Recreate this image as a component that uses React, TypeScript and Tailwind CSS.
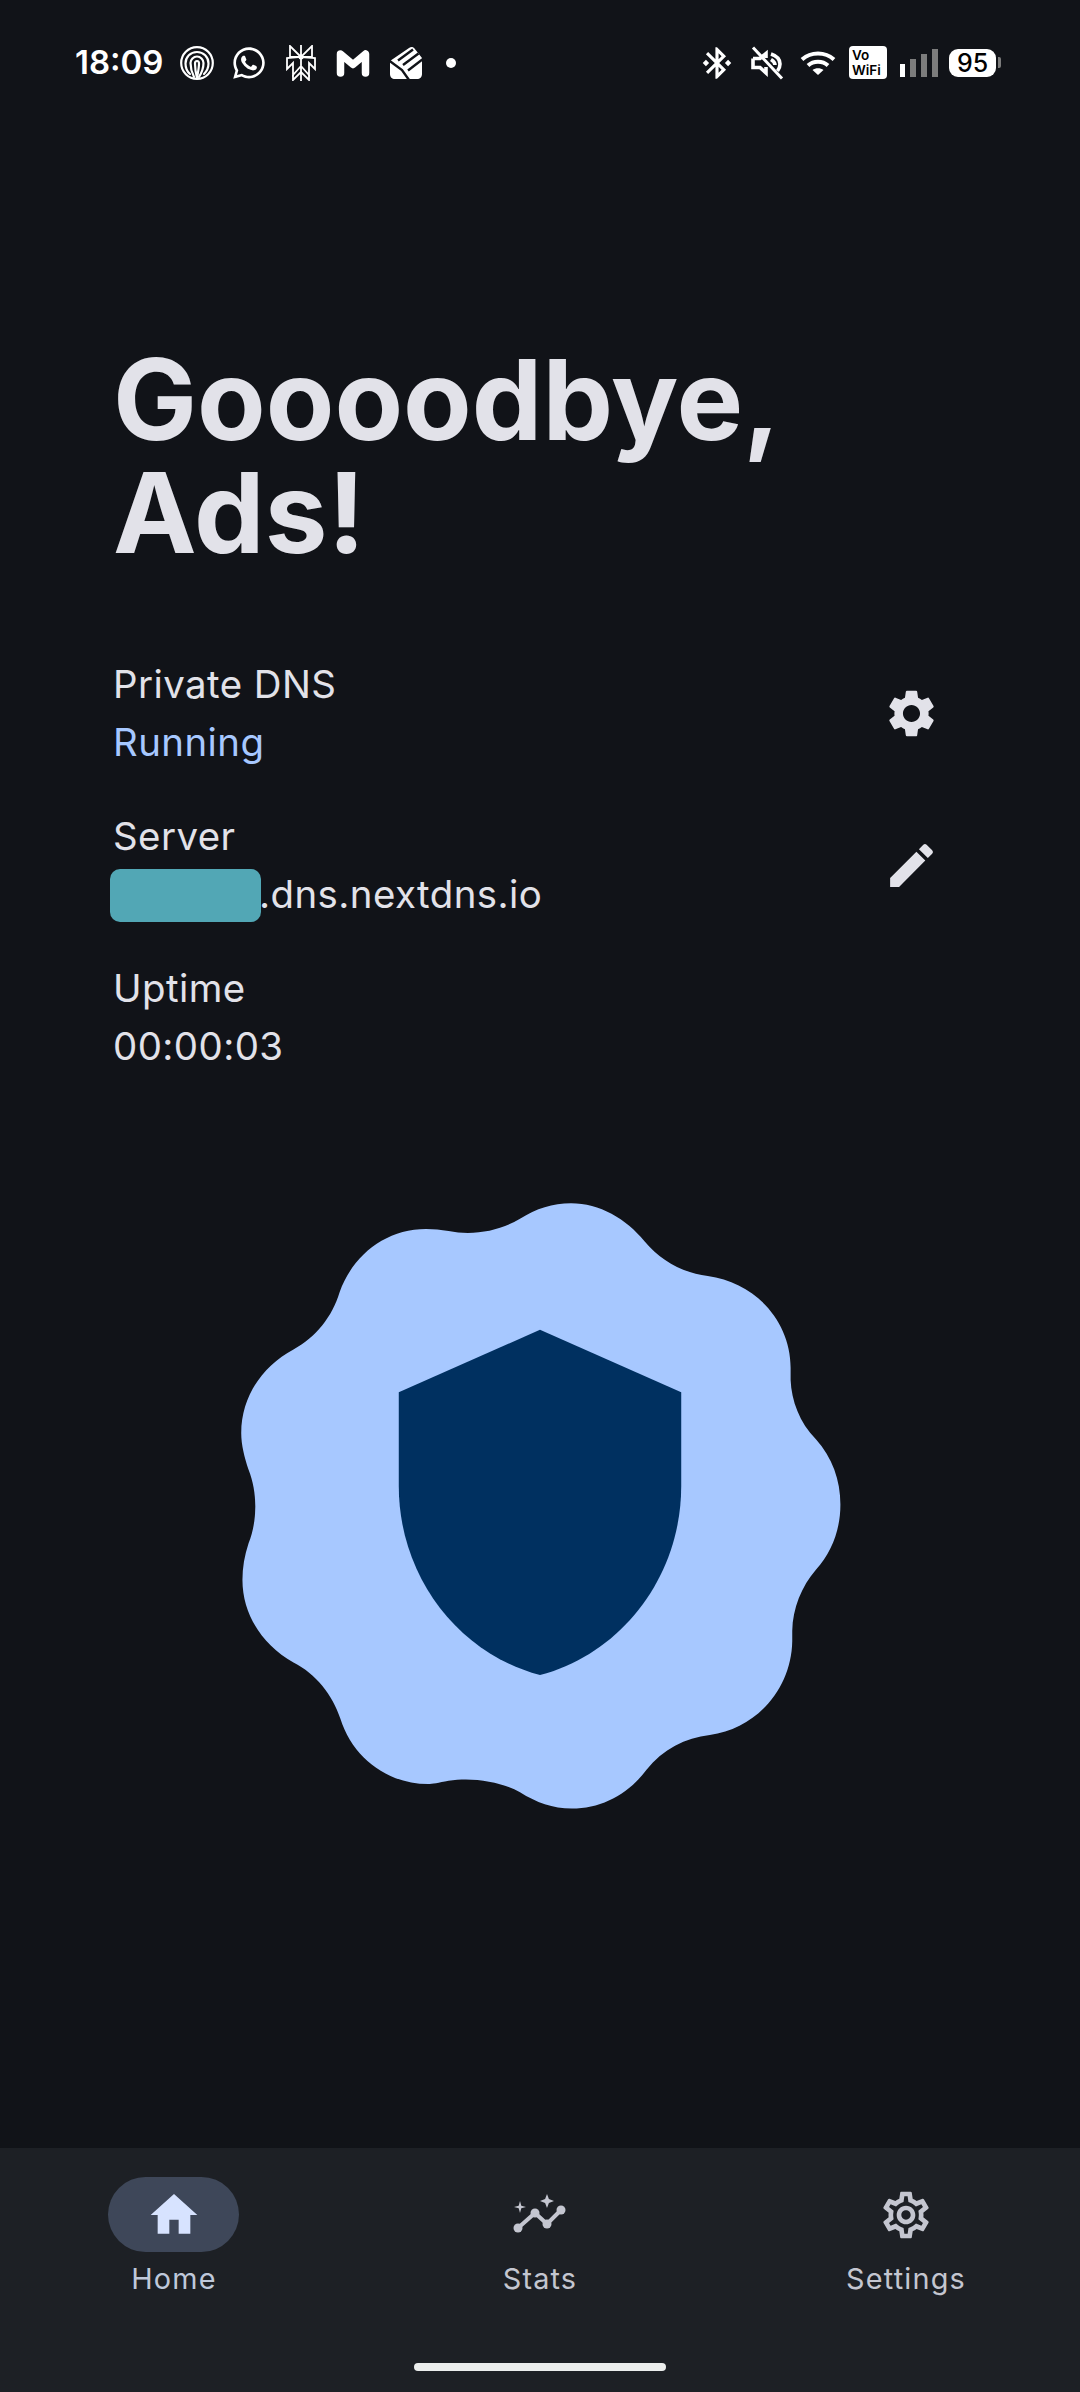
import { FaWhatsapp } from "react-icons/fa";
import { MdBluetoothConnected, MdEdit, MdHome, MdOutlineSettings, MdSettings } from "react-icons/md";

function AtRings() {
  return (
    <svg width="36" height="36" viewBox="0 0 36 36" fill="none" stroke="white" strokeWidth="2.2" strokeLinecap="round">
      <circle cx="18" cy="18" r="15.8" />
      <path d="M11 29C7.5 26 6.5 22 6.5 18.500C6.500 12 11.500 7 18 7C24.500 7 29.500 12 29.500 18.500C29.500 22 28 26 25 29" />
      <path d="M15 32C12 26 11.500 22 11.500 18C11.500 14.500 14.500 11.500 18 11.500C21.500 11.500 24.500 14.500 24.500 18C24.500 23 22.500 28 20 32" />
      <path d="M18 33C16.500 27 16 22 16 18.500C16 17 17 16 18 16C19 16 20 17 20 18.500C20 23 19 27 18 33" />
    </svg>
  );
}

function Moth() {
  return (
    <svg width="30" height="36" viewBox="0 0 30 36" fill="none" stroke="white" strokeWidth="1.800">
      <path d="M15 0V36M15 12L4 1V12H26V1L15 12L1 13V24L7 18V30L15 21L23 30V18L29 24V13L15 12" />
      <path d="M7 30V35L15 27L23 35V30" />
      <circle cx="15" cy="12" r="2.500" fill="white" stroke="none" />
    </svg>
  );
}

function MailM() {
  return (
    <svg width="34" height="28" viewBox="0 0 34 28" fill="none" stroke="white" strokeLinecap="round" strokeLinejoin="round" strokeWidth="7.500">
      <path d="M4.500 24V5L17 15.500L29.500 5V24" />
    </svg>
  );
}

function StackMail() {
  return (
    <svg width="34" height="34" viewBox="0 0 34 34">
      <path fill="white" d="M1 15L20 2C22 .500 24 .500 25.500 2.500L33 12V28C33 31 31 33 28 33H6C3 33 1 31 1 28Z" />
      <path fill="none" stroke="#111318" strokeWidth="2.400" d="M0 14.500L13 24L20 34M9 14.500L24 3.500M14 19L29.500 7.500M19 24.500L34 13" />
    </svg>
  );
}

function Muted() {
  return (
    <svg width="34" height="34" viewBox="0 0 34 34" fill="none" stroke="white" strokeWidth="3.600">
      <path d="M3 12.500H10L16 7.500V12M16 21V27L10 21.500H3V12.500" />
      <path d="M21 8C27 10 30 14 30 18C30 21 29 23 27.500 25M21 13.500C23.500 15 25 17 25 19" />
      <path d="M3 1.500L32 32.500" strokeWidth="3" />
    </svg>
  );
}

function Wifi() {
  return (
    <svg width="36" height="26" viewBox="0 0 36 26" fill="none" stroke="white" strokeWidth="4">
      <path d="M2 9.500C11 1.500 25 1.500 34 9.500" />
      <path d="M8 15.500C13.500 10.500 22.500 10.500 28 15.500" />
      <path d="M18 25L12.500 20C15.500 17.500 20.500 17.500 23.500 20Z" fill="white" stroke="none" />
    </svg>
  );
}

function StatsIcon() {
  return (
    <svg width="60" height="60" viewBox="0 0 60 60" fill="#c4c6d0">
      <path d="M8 43L25 28L37 39L51 25" fill="none" stroke="#c4c6d0" strokeWidth="4" />
      <circle cx="8" cy="43" r="4.500" />
      <circle cx="25" cy="28" r="4.500" />
      <circle cx="37" cy="39" r="4.500" />
      <circle cx="51" cy="25" r="4.500" />
      <path d="M10 16L11.300 20.700L16 22L11.300 23.300L10 28L8.700 23.300L4 22L8.700 20.700Z" />
      <path d="M37 9L38.900 14.100L44 16L38.900 17.900L37 23L35.100 17.900L30 16L35.100 14.100Z" />
    </svg>
  );
}

function Blob() {
  return (
    <svg width="640" height="640" viewBox="0 0 1568 1568">
      <path
        fill="#a7c8ff"
        d="M860 57C930 57 995 95 1040 150C1080 198 1135 228 1195 235C1310 250 1398 345 1398 460L1398 490C1400 540 1420 595 1460 635C1500 680 1520 735 1520 795C1520 855 1500 910 1460 955C1425 995 1403 1050 1402 1105L1402 1130C1400 1245 1315 1345 1200 1360C1140 1367 1085 1395 1045 1445C1000 1505 935 1540 862 1540C815 1540 775 1525 735 1500C690 1475 620 1462 560 1472C535 1477 520 1480 510 1480C410 1480 325 1415 295 1320C275 1260 235 1210 180 1182C105 1140 55 1065 55 980C55 950 60 920 70 890C92 835 92 765 70 710C60 680 52 650 52 620C52 530 105 455 180 415C235 385 275 335 293 275C325 185 405 120 505 120C525 120 540 122 560 125C620 137 685 125 735 95C775 70 815 57 860 57Z"
      />
      <path fill="#003060" d="M784 367L1130 520V750C1130 970 985 1160 784 1213C583 1160 438 970 438 750V520Z" />
    </svg>
  );
}

function StatusBar() {
  return (
    <div className="h-[125px] flex items-center justify-between pl-[75px] pr-[79px] text-white">
      <div className="flex items-center">
        <span className="text-[33px] font-semibold w-[104px]">18:09</span>
        <div className="w-[36px] flex justify-center"><AtRings /></div>
        <FaWhatsapp className="ml-[16px]" size={36} />
        <div className="ml-[19px]"><Moth /></div>
        <div className="ml-[20px]"><MailM /></div>
        <div className="ml-[19px]"><StackMail /></div>
        <div className="ml-[23px] w-[10px] h-[10px] rounded-full bg-white" />
      </div>
      <div className="flex items-center">
        <MdBluetoothConnected size={38} />
        <div className="ml-[14px]"><Muted /></div>
        <div className="ml-[16px]"><Wifi /></div>
        <div className="ml-[13px] w-[38px] h-[33px] rounded-[4px] bg-white text-black text-[13.500px] leading-[15px] font-semibold pl-[3px] pt-[2px]">
          Vo
          <br />
          WiFi
        </div>
        <div className="ml-[13px] flex items-end gap-[5px] h-[28px]">
          <div className="w-[5px] h-[13px] bg-white" />
          <div className="w-[6px] h-[18px] bg-[#7c7c7c]" />
          <div className="w-[6px] h-[23px] bg-[#7c7c7c]" />
          <div className="w-[6px] h-[28px] bg-[#7c7c7c]" />
        </div>
        <div className="ml-[11px] w-[47px] h-[28px] rounded-[9px] bg-white text-black text-[25px] leading-[28px] font-medium text-center">95</div>
        <div className="ml-[2px] w-[3px] h-[11px] rounded-r-[2px] bg-[#7c7c7c]" />
      </div>
    </div>
  );
}

function NavItem({ label, active, children }: { label: string; active?: boolean; children: React.ReactNode }) {
  return (
    <div className="w-[132px] flex flex-col items-center">
      <div className={active ? "w-[131px] h-[75px] self-start rounded-full bg-[#3e4759] flex items-center justify-center" : "w-[131px] h-[75px] flex items-center justify-center"}>
        {children}
      </div>
      <div className={active ? "mt-[8px] text-[28.800px] leading-[38px] tracking-[1.200px] text-[#bfc8da] whitespace-nowrap" : "mt-[8px] text-[28.800px] leading-[38px] tracking-[1.200px] text-[#c4c6d0] whitespace-nowrap"}>
        {label}
      </div>
    </div>
  );
}

export default function App() {
  return (
    <div className="w-[1080px] h-[2392px] overflow-hidden bg-[#111318] flex flex-col font-[Inter,sans-serif]">
      <StatusBar />
      <h1 className="mt-[218px] pl-[113px] text-[112px] leading-[113px] font-bold text-[#e2e2e9]">
        Goooodbye,
        <br />
        Ads!
      </h1>
      <div className="mt-[87px] pl-[113px] pr-[140px] flex flex-col gap-[38px] text-[38.400px] leading-[56px] tracking-[0.450px] text-[#e2e2e9]">
        <div className="flex items-center justify-between">
          <div>
            <div>Private DNS</div>
            <div className="mt-[2px] text-[#a7c8ff]">Running</div>
          </div>
          <MdSettings size={57} />
        </div>
        <div className="flex items-center justify-between">
          <div>
            <div>Server</div>
            <div className="mt-[2px] flex items-center">
              <div className="relative z-10 -ml-[3px] mt-[2px] w-[151px] h-[53px] rounded-[10px] bg-[#52a7b5]" />
              <span className="-ml-[2px]">.dns.nextdns.io</span>
            </div>
          </div>
          <MdEdit size={57} />
        </div>
        <div>
          <div>Uptime</div>
          <div className="mt-[2px]">00:00:03</div>
        </div>
      </div>
      <div className="mt-[106px] flex justify-center">
        <Blob />
      </div>
      <div className="flex-1" />
      <nav className="relative h-[244px] bg-[#1d2025] pt-[29px] px-[108px] flex justify-between">
        <NavItem label="Home" active>
          <MdHome size={56} color="#d7e3ff" />
        </NavItem>
        <NavItem label="Stats">
          <StatsIcon />
        </NavItem>
        <NavItem label="Settings">
          <MdOutlineSettings size={56} color="#c4c6d0" />
        </NavItem>
        <div className="absolute left-[414px] top-[215px] w-[252px] h-[8px] rounded-full bg-[#eceeed]" />
      </nav>
    </div>
  );
}
